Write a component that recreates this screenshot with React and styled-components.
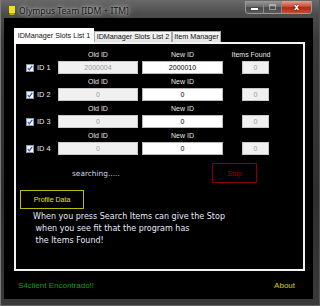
import React from "react";
import styled, { createGlobalStyle } from "styled-components";

const GlobalStyle = createGlobalStyle`
  html, body { margin: 0; padding: 0; background: #1a1a1a; }
  body { width: 320px; height: 306px; overflow: hidden; }
  * { box-sizing: border-box; }
`;

const Window = styled.div`
  width: 320px;
  height: 306px;
  display: flex;
  flex-direction: column;
  background: linear-gradient(180deg, #6a6a6a 0px, #4c4c4c 14px, #3a3a3a 40px, #2e2e2e 200px, #3a3a3a 306px);
  border-left: 1px solid #7a7a7a;
  border-right: 1px solid #555;
  border-bottom: 1px solid #666;
  font-family: "Liberation Sans", Arial, sans-serif;
`;

const TitleBar = styled.div`
  height: 18px;
  display: flex;
  align-items: flex-start;
  flex-shrink: 0;
`;

const AppIcon = styled.svg`
  margin: 6px 0 0 8px;
  flex-shrink: 0;
`;

const Title = styled.div`
  margin: 5px 0 0 4px;
  font-family: "Noto Sans", "Liberation Sans", sans-serif;
  font-size: 8.6px;
  line-height: 12px;
  color: #111;
  white-space: nowrap;
  text-shadow: 0 0 3px rgba(230, 230, 230, 0.9), 0 0 6px rgba(200, 200, 200, 0.8), 0 0 9px rgba(180, 180, 180, 0.6);
`;

const Controls = styled.div`
  margin: 1px 7px 0 auto;
  display: flex;
  height: 13px;
  border: 1px solid #9a9a9a;
  border-top: none;
  border-radius: 0 0 4px 4px;
  overflow: hidden;
`;

const CtrlButton = styled.div`
  width: ${(p) => p.$w}px;
  height: 100%;
  display: flex;
  align-items: center;
  justify-content: center;
  border-left: ${(p) => (p.$first ? "none" : "1px solid #8a8a8a")};
  background: ${(p) =>
    p.$close
      ? "linear-gradient(180deg, #e8a090 0%, #c8503c 45%, #b02a18 55%, #c84a30 100%)"
      : "linear-gradient(180deg, #9a9a9a 0%, #6e6e6e 45%, #4a4a4a 55%, #5a5a5a 100%)"};
  color: #fff;
  font-size: 8px;
  font-weight: bold;
  font-family: "DejaVu Sans", sans-serif;
  text-shadow: 0 0 2px #000;
`;

const MinGlyph = styled.div`
  width: 7px;
  height: 2px;
  background: #fff;
  margin-top: 4px;
  box-shadow: 0 0 1px #000;
`;

const MaxGlyph = styled.div`
  width: 7px;
  height: 6px;
  border: 1px solid #cfcfcf;
  border-top-width: 2px;
  opacity: 0.6;
`;

const Client = styled.div`
  flex: 1;
  margin: 0 6px 6px 3px;
  background: #000;
  display: flex;
  flex-direction: column;
  padding: 10px 8px 0 10px;
`;

const TabRow = styled.div`
  display: flex;
  align-items: flex-end;
  height: 14px;
  position: relative;
  z-index: 1;
`;

const Tab = styled.div`
  width: ${(p) => p.$w}px;
  height: ${(p) => (p.$active ? 16 : 11)}px;
  margin-bottom: ${(p) => (p.$active ? -2 : 0)}px;
  background: ${(p) => (p.$active ? "#ffffff" : "linear-gradient(180deg, #f6f6f6, #e4e4e4)")};
  border: 1px solid ${(p) => (p.$active ? "#ffffff" : "#a8a8a8")};
  border-bottom: none;
  font-size: 7.2px;
  line-height: ${(p) => (p.$active ? 13 : 10)}px;
  color: #111;
  text-align: center;
  white-space: nowrap;
  overflow: hidden;
`;

const Panel = styled.div`
  width: 291px;
  height: 229px;
  border: 2px solid #f2f2f2;
  padding: 3px 0 0 10px;
  display: flex;
  flex-direction: column;
`;

const SlotGrid = styled.div`
  display: grid;
  grid-template-columns: 32px 84px 100px 27px;
  grid-auto-rows: 14px 13px;
`;

const ColLabel = styled.div`
  font-size: 7px;
  line-height: 15px;
  color: #e6e6e6;
  text-align: center;
  width: ${(p) => p.$w}px;
  margin-left: ${(p) => p.$shift || 0}px;
  white-space: nowrap;
`;

const IdCell = styled.label`
  display: flex;
  align-items: center;
  gap: 3px;
  font-size: 7.4px;
  color: #ededed;
`;

const Check = styled.span`
  width: 8px;
  height: 8px;
  background: linear-gradient(135deg, #e8ecf2, #ffffff);
  border: 1px solid #8e97a4;
  display: flex;
  align-items: center;
  justify-content: center;
`;

const Field = styled.div`
  width: ${(p) => p.$w}px;
  height: 13px;
  background: ${(p) => (p.$disabled ? "#f0f0f0" : "#ffffff")};
  border: 1px solid ${(p) => (p.$disabled ? "#c8c8c8" : "#b8b8b8")};
  color: ${(p) => (p.$disabled ? "#9a9a9a" : "#000")};
  font-size: 7px;
  line-height: 11px;
  text-align: center;
`;

const StatusRow = styled.div`
  display: grid;
  grid-template-columns: 46px 140px 45px;
  height: 20px;
  margin-top: 8px;
  align-items: center;
`;

const Searching = styled.div`
  grid-column: 2;
  font-family: "DejaVu Sans", sans-serif;
  font-size: 7.4px;
  color: #ccd6ee;
`;

const StopButton = styled.div`
  grid-column: 3;
  height: 20px;
  border: 1px solid #880000;
  color: #a00000;
  font-size: 7px;
  display: flex;
  align-items: center;
  justify-content: center;
`;

const ProfileButton = styled.div`
  width: 64px;
  height: 19px;
  margin: 7px 0 0 -6px;
  border: 1px solid #bcbc00;
  color: #e6e600;
  font-size: 7px;
  display: flex;
  align-items: center;
  justify-content: center;
`;

const Note = styled.div`
  margin: 2px 0 0 7px;
  font-family: "DejaVu Sans", sans-serif;
  font-size: 8px;
  line-height: 12px;
  color: #e6eaff;
  white-space: pre;
`;

const Footer = styled.div`
  flex: 1;
  display: flex;
  align-items: center;
  justify-content: space-between;
  padding: 0 10px 0 4px;
  font-size: 8px;
`;

const FooterText = styled.span`
  color: ${(p) => p.$color};
`;

const CheckMark = () => (
  <svg width="6" height="6" viewBox="0 0 6 6">
    <path d="M0.8 3.2 L2.3 4.8 L5.2 0.8" fill="none" stroke="#2a55c8" strokeWidth="1.2" />
  </svg>
);

const slots = [
  { id: 1, old: "2000004", nw: "2000010", found: "0" },
  { id: 2, old: "0", nw: "0", found: "0" },
  { id: 3, old: "0", nw: "0", found: "0" },
  { id: 4, old: "0", nw: "0", found: "0" },
];

export default function App() {
  return (
    <>
      <GlobalStyle />
      <Window>
        <TitleBar>
          <AppIcon width="6" height="11" viewBox="0 0 6 11">
            <rect x="0" y="0" width="6" height="7" fill="#f2e21a" />
            <rect x="0.5" y="7" width="5" height="2" fill="#b8a800" />
            <rect x="1.5" y="9" width="3" height="2" fill="#555" />
          </AppIcon>
          <Title>Olympus Team [IDM + ITM]</Title>
          <Controls>
            <CtrlButton $w={17} $first>
              <MinGlyph />
            </CtrlButton>
            <CtrlButton $w={18}>
              <MaxGlyph />
            </CtrlButton>
            <CtrlButton $w={30} $close>x</CtrlButton>
          </Controls>
        </TitleBar>
        <Client>
          <TabRow>
            <Tab $w={80} $active>IDManager Slots List 1</Tab>
            <Tab $w={78}>IDManager Slots List 2</Tab>
            <Tab $w={49}>Item Manager</Tab>
          </TabRow>
          <Panel>
            <SlotGrid>
              {slots.map((s) => (
                <React.Fragment key={s.id}>
                  <span />
                  <ColLabel $w={80}>Old ID</ColLabel>
                  <ColLabel $w={81}>New ID</ColLabel>
                  {s.id === 1 ? (
                    <ColLabel $w={44} $shift={-13}>Items Found</ColLabel>
                  ) : (
                    <span />
                  )}
                  <IdCell>
                    <Check>
                      <CheckMark />
                    </Check>
                    ID {s.id}
                  </IdCell>
                  <Field $w={80} $disabled>{s.old}</Field>
                  <Field $w={81}>{s.nw}</Field>
                  <Field $w={27} $disabled>{s.found}</Field>
                </React.Fragment>
              ))}
            </SlotGrid>
            <StatusRow>
              <Searching>searching.....</Searching>
              <StopButton>Stop</StopButton>
            </StatusRow>
            <ProfileButton>Profile Data</ProfileButton>
            <Note>{"When you press Search Items can give the Stop\n when you see fit that the program has\n the Items Found!"}</Note>
          </Panel>
          <Footer>
            <FooterText $color="#1f9a1f">S4client Encontrado!!</FooterText>
            <FooterText $color="#d4d400">About</FooterText>
          </Footer>
        </Client>
      </Window>
    </>
  );
}
